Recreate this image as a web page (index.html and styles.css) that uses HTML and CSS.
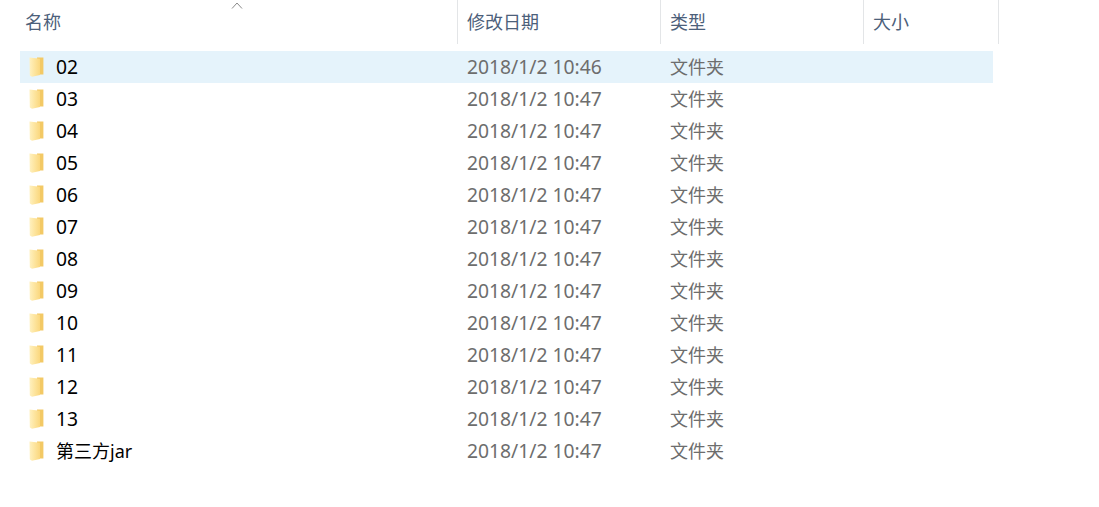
FILE: index.html
```html
<!DOCTYPE html>
<html lang="zh-CN">
<head>
  <meta charset="UTF-8">
  <title>文件列表</title>
  <link rel="stylesheet" href="styles.css">
</head>
<body>
  <svg class="defs" width="0" height="0">
    <defs>
      <linearGradient id="folder-front" x1="0" y1="0" x2="1" y2="0">
        <stop offset="0" stop-color="#fff1c0"/>
        <stop offset="0.55" stop-color="#fde39a"/>
        <stop offset="1" stop-color="#fad77e"/>
      </linearGradient>
      <symbol id="folder" viewBox="0 0 16 20">
        <path d="M8 0.5h6.4v17H8z" fill="#f3c965"/>
        <path d="M0.5 0.5l10.5 1.2v16.2L3 19.8 0.8 18.6z" fill="url(#folder-front)"/>
      </symbol>
    </defs>
  </svg>

  <div class="list">
    <div class="header">
      <div class="col name-col">名称<span class="sort"><svg width="12" height="7" viewBox="0 0 12 7"><path d="M1 6.5L6 1l5 5.5" fill="none" stroke="#8a8a8a"/></svg></span></div>
      <div class="col">修改日期</div>
      <div class="col">类型</div>
      <div class="col">大小</div>
    </div>

    <div class="rows">
      <div class="row selected"><div class="name"><svg class="icon"><use href="#folder"/></svg>02</div><div class="date">2018/1/2 10:46</div><div class="type">文件夹</div></div>
      <div class="row"><div class="name"><svg class="icon"><use href="#folder"/></svg>03</div><div class="date">2018/1/2 10:47</div><div class="type">文件夹</div></div>
      <div class="row"><div class="name"><svg class="icon"><use href="#folder"/></svg>04</div><div class="date">2018/1/2 10:47</div><div class="type">文件夹</div></div>
      <div class="row"><div class="name"><svg class="icon"><use href="#folder"/></svg>05</div><div class="date">2018/1/2 10:47</div><div class="type">文件夹</div></div>
      <div class="row"><div class="name"><svg class="icon"><use href="#folder"/></svg>06</div><div class="date">2018/1/2 10:47</div><div class="type">文件夹</div></div>
      <div class="row"><div class="name"><svg class="icon"><use href="#folder"/></svg>07</div><div class="date">2018/1/2 10:47</div><div class="type">文件夹</div></div>
      <div class="row"><div class="name"><svg class="icon"><use href="#folder"/></svg>08</div><div class="date">2018/1/2 10:47</div><div class="type">文件夹</div></div>
      <div class="row"><div class="name"><svg class="icon"><use href="#folder"/></svg>09</div><div class="date">2018/1/2 10:47</div><div class="type">文件夹</div></div>
      <div class="row"><div class="name"><svg class="icon"><use href="#folder"/></svg>10</div><div class="date">2018/1/2 10:47</div><div class="type">文件夹</div></div>
      <div class="row"><div class="name"><svg class="icon"><use href="#folder"/></svg>11</div><div class="date">2018/1/2 10:47</div><div class="type">文件夹</div></div>
      <div class="row"><div class="name"><svg class="icon"><use href="#folder"/></svg>12</div><div class="date">2018/1/2 10:47</div><div class="type">文件夹</div></div>
      <div class="row"><div class="name"><svg class="icon"><use href="#folder"/></svg>13</div><div class="date">2018/1/2 10:47</div><div class="type">文件夹</div></div>
      <div class="row"><div class="name mixed"><svg class="icon"><use href="#folder"/></svg>第三方jar</div><div class="date">2018/1/2 10:47</div><div class="type">文件夹</div></div>
    </div>
  </div>
</body>
</html>
```

FILE: styles.css
```css
* {
  box-sizing: border-box;
  margin: 0;
  padding: 0;
}

body {
  background-color: white;
  font-family: "Noto Sans", "Noto Sans CJK SC", sans-serif;
  font-size: 18px;
  overflow: hidden;
}

.defs {
  display: block;
  height: 0;
}

.list {
  padding-left: 20px;
}

.header {
  display: grid;
  grid-template-columns: 438px 203px 203px 135px;
  height: 42px;
  width: 979px;
}

.col {
  border-right: 1px solid #e3e5e7;
  color: #4c607a;
  line-height: 44px;
  padding-left: 9px;
}

.name-col {
  padding-left: 5px;
  position: relative;
}

.sort {
  position: absolute;
  left: 211px;
  top: 2px;
  line-height: 0;
}

.rows {
  margin-top: 9px;
  width: 973px;
}

.row {
  display: grid;
  grid-template-columns: 438px 203px 1fr;
  height: 32px;
  line-height: 32px;
}

.selected {
  background-color: #e5f3fb;
}

.name {
  align-items: center;
  color: #000;
  display: flex;
  font-size: 19.3px;
  padding-left: 9px;
}

.mixed {
  font-size: 18px;
}

.icon {
  height: 20px;
  margin-right: 11px;
  width: 16px;
}

.date,
.type {
  color: #6d6d6d;
  padding-left: 9px;
}

.date {
  font-size: 19.3px;
}
```
